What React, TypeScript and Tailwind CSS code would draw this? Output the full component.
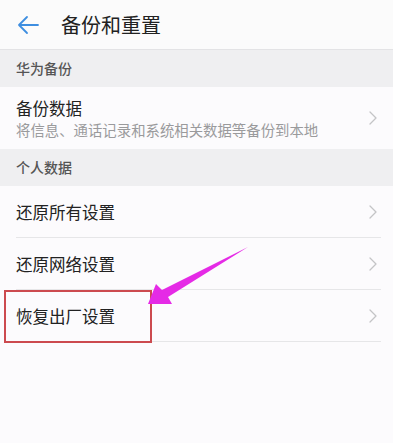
import React from 'react';

const font = { fontFamily: '"Noto Sans CJK SC", "Noto Sans", sans-serif' };

const Chevron = () => (
  <svg width="8" height="14" viewBox="0 0 8 14" fill="none" className="shrink-0">
    <path d="M1 1l6 6-6 6" stroke="#c4c4c6" strokeWidth="1.3" strokeLinecap="round" strokeLinejoin="round" />
  </svg>
);

const Section = ({ title }: { title: string }) => (
  <div className="h-[37px] bg-[#efeff1] flex items-center px-4 text-[14px] font-medium text-[#555]">{title}</div>
);

const Row = ({ title, last }: { title: string; last?: boolean }) => (
  <div className="relative h-[52px] flex items-center justify-between pl-4 pr-4">
    <span className="text-[16.5px] text-[#222]">{title}</span>
    <Chevron />
    {!last && <div className="absolute left-4 right-3 bottom-0 h-px bg-[#e6e6e8]" />}
  </div>
);

export default function App() {
  return (
    <div className="relative w-[393px] h-[443px] bg-[#fcfbfd] overflow-hidden" style={font}>
      <div className="h-[50px] flex items-center bg-[#fbfbfb] border-b border-[#e3e3e5]">
        <svg width="22" height="20" viewBox="0 0 22 20" className="ml-[17px]" fill="none">
          <path d="M21 10H2M10 2L2 10l8 8" stroke="#3e8ee0" strokeWidth="1.8" strokeLinecap="round" strokeLinejoin="round" />
        </svg>
        <span className="ml-[22px] text-[20px] text-[#222] leading-none">备份和重置</span>
      </div>
      <Section title="华为备份" />
      <div className="h-[62px] flex items-center justify-between pl-4 pr-4">
        <div className="flex flex-col">
          <span className="text-[16.5px] text-[#222] leading-[22px]">备份数据</span>
          <span className="text-[14.4px] text-[#9a9a9c] leading-[20px] mt-[1px]">将信息、通话记录和系统相关数据等备份到本地</span>
        </div>
        <Chevron />
      </div>
      <Section title="个人数据" />
      <Row title="还原所有设置" />
      <Row title="还原网络设置" />
      <Row title="恢复出厂设置" />

      <div className="absolute left-[4px] top-[290px] w-[148px] h-[53px] border-[2.5px] border-[#cc4a4f]" />
      <svg className="absolute left-0 top-0" width="393" height="443" viewBox="0 0 393 443">
        <polygon points="148,304 156,284 162,290 248,247 168,297 172,304" fill="#e52ae6" />
      </svg>
    </div>
  );
}
